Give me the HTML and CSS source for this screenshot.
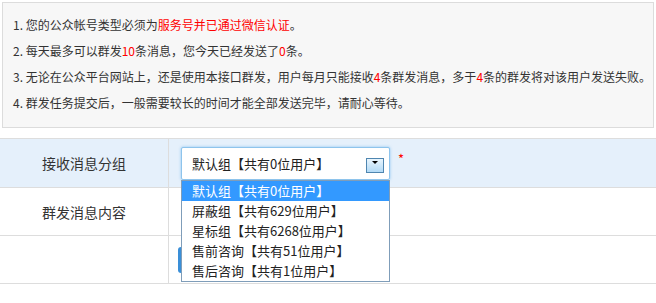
FILE: index.html
```html
<!DOCTYPE html>
<html lang="zh-CN">
<head>
  <meta charset="UTF-8">
  <title>群发消息</title>
  <link rel="stylesheet" href="styles.css">
</head>
<body>
  <div class="page">
    <div class="notice">
      <p>1. 您的公众帐号类型必须为<span class="red">服务号并已通过微信认证</span>。</p>
      <p>2. 每天最多可以群发<span class="red">10</span>条消息，您今天已经发送了<span class="red">0</span>条。</p>
      <p>3. 无论在公众平台网站上，还是使用本接口群发，用户每月只能接收<span class="red">4</span>条群发消息，多于<span class="red">4</span>条的群发将对该用户发送失败。</p>
      <p>4. 群发任务提交后，一般需要较长的时间才能全部发送完毕，请耐心等待。</p>
    </div>

    <table class="form-table">
      <tr class="hl">
        <th>接收消息分组</th>
        <td>
          <div class="field">
            <div class="select-wrap">
              <div class="select">
                <span class="select-text">默认组【共有0位用户】</span>
                <span class="arrow"></span>
              </div>
              <ul class="options">
                <li class="active">默认组【共有0位用户】</li>
                <li>屏蔽组【共有629位用户】</li>
                <li>星标组【共有6268位用户】</li>
                <li>售前咨询【共有51位用户】</li>
                <li>售后咨询【共有1位用户】</li>
              </ul>
            </div>
            <span class="req">*</span>
          </div>
        </td>
      </tr>
      <tr>
        <th>群发消息内容</th>
        <td></td>
      </tr>
      <tr>
        <th></th>
        <!-- send button sits under the open dropdown -->
        <td><button class="btn" type="button" aria-label="发送"></button></td>
      </tr>
    </table>
  </div>
</body>
</html>
```

FILE: styles.css
```css
body {
  margin: 0;
  font-family: "Noto Sans CJK SC", sans-serif;
  color: #333;
  background-color: #fff;
}

.page {
  padding: 2px 0;
}

.notice {
  margin: 0 2px;
  padding: 9px 10px 11px;
  background-color: #f7f7f7;
  border: 1px solid #dcdcdc;
  font-size: 12px;
  line-height: 26px;
}

.notice p {
  margin: 0;
  white-space: nowrap;
}

.red {
  color: #f00;
}

.form-table {
  width: 100%;
  margin-top: 10px;
  border-collapse: collapse;
  font-size: 14px;
}

.form-table th,
.form-table td {
  height: 47px;
  padding: 0;
  border-top: 1px solid #ddd;
  border-bottom: 1px solid #ddd;
  vertical-align: middle;
}

.form-table th {
  width: 168px;
  border-right: 1px solid #ddd;
  font-weight: normal;
  text-align: center;
}

.form-table td {
  padding-left: 12px;
}

.form-table tr.hl th,
.form-table tr.hl td {
  height: 48px;
  background-color: #e5f0fb; /* light blue row */
}

.field {
  display: flex;
  align-items: flex-start;
}

.select-wrap {
  position: relative;
  width: 209px;
}

.select {
  display: flex;
  align-items: center;
  justify-content: space-between;
  height: 31px;
  padding: 0 5px 0 10px;
  background-color: #fff;
  border: 1px solid #8ec4ec;
  border-radius: 2px;
  box-shadow: 0 0 3px rgba(82, 168, 236, 0.6);
  font-size: 13px;
  color: #222;
}

.arrow {
  position: relative;
  width: 16px;
  height: 13px;
  margin-top: 5px;
  border: 1px solid #4f86b0;
  background: linear-gradient(#e9f5fd, #b2daf6);
}

.arrow::after {
  content: "";
  position: absolute;
  top: 2px;
  left: 5px;
  border-left: 3px solid transparent;
  border-right: 3px solid transparent;
  border-top: 3px solid #000;
}

.options {
  position: absolute;
  top: 100%;
  left: 0;
  z-index: 10;
  width: 207px;
  margin: 0;
  padding: 0;
  list-style: none;
  background-color: #fff;
  border: 1px solid #7f9db9;
  font-size: 13px;
  color: #222;
}

.options li {
  height: 20px;
  line-height: 20px;
  padding-left: 10px;
  white-space: nowrap;
}

.options li.active {
  background-color: #3399ff;
  color: #fff;
}

.req {
  margin: 4px 0 0 8px;
  color: #f00;
  font-size: 13px;
  line-height: 16px;
}

.btn {
  display: block;
  margin-left: -3px;
  width: 80px;
  height: 26px;
  background-color: #3a8fd8;
  border: none;
  border-radius: 3px;
}
```
